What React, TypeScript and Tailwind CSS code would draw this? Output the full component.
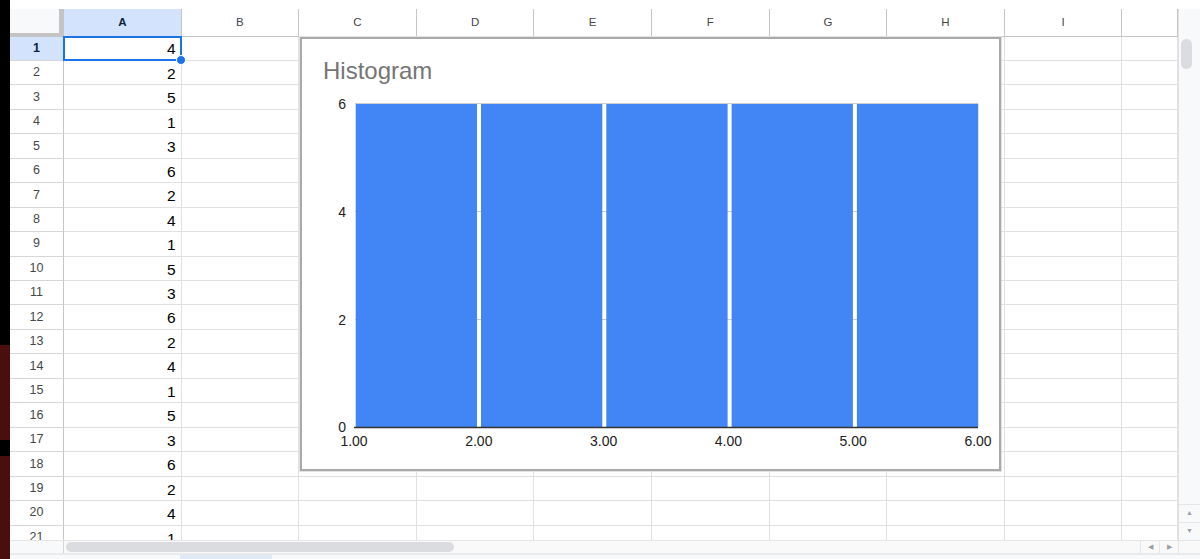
const values = [4, 2, 5, 1, 3, 6, 2, 4, 1, 5, 3, 6, 2, 4, 1, 5, 3, 6, 2, 4, 1];
const cols = ['A', 'B', 'C', 'D', 'E', 'F', 'G', 'H', 'I', ''];

function Histogram() {
  const barLeft = 55.7;
  const step = 125.3;
  const xs = ['1.00', '2.00', '3.00', '4.00', '5.00', '6.00'];
  return (
    <div className="absolute left-[300px] top-[37px] z-20 h-[434px] w-[701px] border-2 border-[#a9a9a9] bg-white shadow-[0_0_0_1px_#e2e2e2]">
      <svg width="697" height="430" viewBox="2 2 697 430" className="block">
        <text x="23" y="42" fontSize="24" fill="#757575" fontFamily="Liberation Sans, Arial, sans-serif">
          Histogram
        </text>
        <line x1="55" y1="66.5" x2="678" y2="66.5" stroke="#cccccc" strokeWidth="1" />
        <line x1="55" y1="174.5" x2="678" y2="174.5" stroke="#cccccc" strokeWidth="1" />
        <line x1="55" y1="282.5" x2="678" y2="282.5" stroke="#cccccc" strokeWidth="1" />
        {[0, 1, 2, 3, 4].map((i) => (
          <rect key={i} x={barLeft + i * step} y="67" width="121.3" height="323" fill="#4285f4" />
        ))}
        <line x1="54" y1="390.5" x2="678" y2="390.5" stroke="#333333" strokeWidth="1.5" />
        {[
          ['6', 72],
          ['4', 180],
          ['2', 288],
          ['0', 395],
        ].map(([t, y]) => (
          <text key={t} x="46" y={y} textAnchor="end" fontSize="14" fill="#222222" fontFamily="Liberation Sans, Arial, sans-serif">
            {t}
          </text>
        ))}
        {xs.map((t, i) => (
          <text key={t} x={54 + i * 124.8} y="409" textAnchor="middle" fontSize="14" fill="#222222" fontFamily="Liberation Sans, Arial, sans-serif">
            {t}
          </text>
        ))}
      </svg>
    </div>
  );
}

export default function App() {
  return (
    <div className="relative flex h-[559px] w-[1200px] overflow-hidden bg-white font-['Liberation_Sans',Arial,sans-serif]">
      <div className="flex w-[10px] flex-col">
        <div className="h-[345px] bg-black" />
        <div className="h-[95px] bg-[#4a0e0e]" />
        <div className="h-[16px] bg-black" />
        <div className="flex-1 bg-[#4a0e0e]" />
      </div>

      <div className="flex w-[1190px] flex-col">
        <div className="h-[9px] bg-white" />
        <div className="flex h-[531px]">
          <div className="h-full w-[1168px] overflow-hidden">
            <div className="grid grid-cols-[54px_repeat(9,117.6px)_1fr] grid-rows-[27.5px_repeat(21,24.46px)]">
              <div className="border-r-[5px] border-b-[4px] border-[#c4c4c4] bg-[#f8f9fa]" />
              {cols.map((c, i) => (
                <div
                  key={'h' + i}
                  className={
                    i === 0
                      ? 'flex items-center justify-center border-r border-b border-[#c4c7c5] bg-[#d3e3fd] text-[11.5px] font-bold text-[#0b1f44]'
                      : 'flex items-center justify-center border-r border-b border-[#c4c7c5] bg-white text-[11.5px] text-[#444746]'
                  }
                >
                  {c}
                </div>
              ))}
              {values.map((v, r) => (
                <>
                  <div
                    key={'r' + r}
                    className={
                      r === 0
                        ? 'flex items-center justify-center border-r border-b border-r-[#c4c7c5] border-b-[#d6d6d6] bg-[#d3e3fd] text-[12.5px] font-bold text-[#0b1f44]'
                        : 'flex items-center justify-center border-r border-b border-r-[#c4c7c5] border-b-[#d6d6d6] bg-white text-[12.5px] text-[#444746]'
                    }
                  >
                    {r + 1}
                  </div>
                  {cols.map((_, c) =>
                    c === 0 ? (
                      <div
                        key={r + '-' + c}
                        className={
                          r === 0
                            ? 'relative z-10 flex items-end justify-end border-r border-b border-[#e1e1e1] pr-[5px] pb-[3px] text-[15.5px] leading-none text-black'
                            : 'flex items-end justify-end border-r border-b border-[#e1e1e1] pr-[5px] pb-[3px] text-[15.5px] leading-none text-black'
                        }
                      >
                        {v}
                        {r === 0 && (
                          <>
                            <div className="absolute -top-px -left-px -right-px -bottom-px border-2 border-[#1a73e8]" />
                            <div className="absolute -right-[5.5px] -bottom-[5.5px] h-[10px] w-[10px] rounded-full border border-white bg-[#1a73e8]" />
                          </>
                        )}
                      </div>
                    ) : (
                      <div key={r + '-' + c} className="border-r border-b border-[#e1e1e1]" />
                    )
                  )}
                </>
              ))}
            </div>
          </div>

          <div className="flex w-[22px] flex-col border-l border-[#e0e0e0] bg-[#f8f9fa]">
            <div className="h-[28px]" />
            <div className="ml-[2px] mt-[2px] h-[30px] w-[11px] rounded-full bg-[#dadce0]" />
            <div className="flex-1" />
            <div className="flex h-[18px] items-center justify-center border-t border-[#e6e6e6] text-[7px] text-[#9aa0a6]">▲</div>
            <div className="flex h-[18px] items-center justify-center border-t border-[#e6e6e6] text-[7px] text-[#9aa0a6]">▼</div>
          </div>
        </div>

        <div className="flex h-[13px] border-t border-[#e6e6e6] bg-[#f9f9f9]">
          <div className="w-[54px] border-r border-[#d6d6d6] bg-[#f8f9fa]" />
          <div className="flex flex-1 items-center pl-[2px]">
            <div className="h-[10px] w-[388px] rounded-full bg-[#dadce0]" />
          </div>
          <div className="flex w-[19px] items-center justify-center border-l border-[#e6e6e6] text-[7px] text-[#9aa0a6]">◀</div>
          <div className="flex w-[19px] items-center justify-center border-l border-[#e6e6e6] text-[7px] text-[#9aa0a6]">▶</div>
          <div className="w-[22px] border-l border-[#e6e6e6]" />
        </div>
        <div className="flex h-[6px] border-t-2 border-[#e8eaed] bg-[#f8f9fa]">
          <div className="ml-[170px] w-[92px] bg-[#e1e9f7]" />
        </div>
      </div>

      <Histogram />
    </div>
  );
}
